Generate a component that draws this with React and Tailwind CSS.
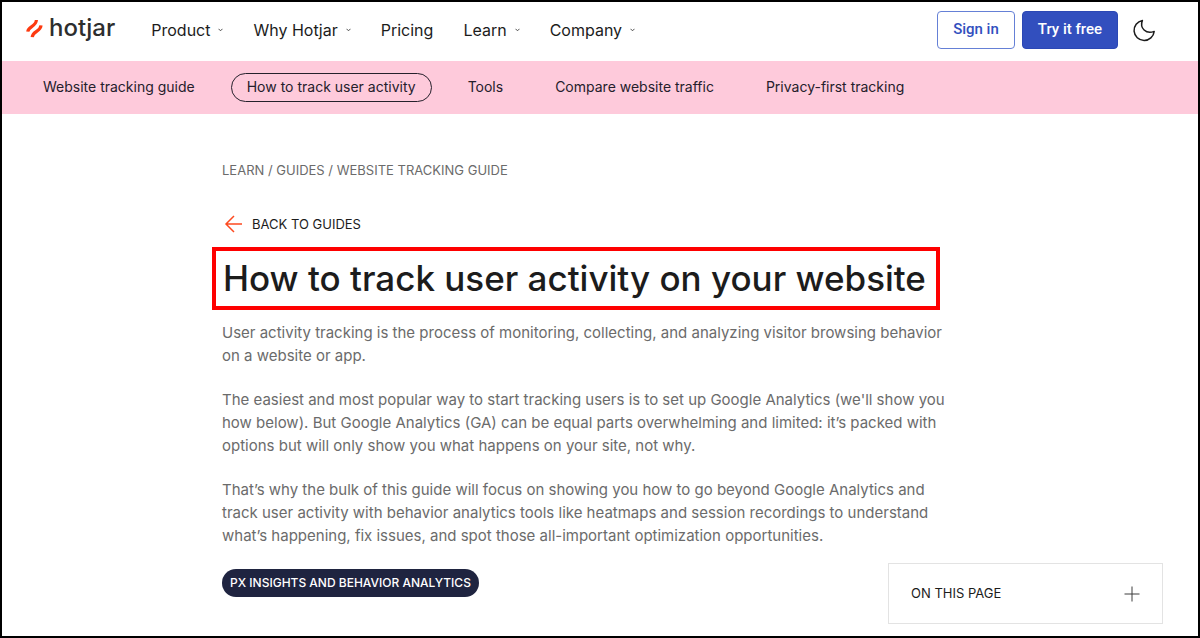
import React from "react";

const navItems = [
  { label: "Product", menu: true },
  { label: "Why Hotjar", menu: true },
  { label: "Pricing", menu: false },
  { label: "Learn", menu: true },
  { label: "Company", menu: true },
];

const guideLinks = [
  { label: "Website tracking guide" },
  { label: "How to track user activity", active: true },
  { label: "Tools" },
  { label: "Compare website traffic" },
  { label: "Privacy-first tracking" },
];

const paragraphs = [
  "User activity tracking is the process of monitoring, collecting, and analyzing visitor browsing behavior on a website or app.",
  "The easiest and most popular way to start tracking users is to set up Google Analytics (we'll show you how below). But Google Analytics (GA) can be equal parts overwhelming and limited: it’s packed with options but will only show you what happens on your site, not why.",
  "That’s why the bulk of this guide will focus on showing you how to go beyond Google Analytics and track user activity with behavior analytics tools like heatmaps and session recordings to understand what’s happening, fix issues, and spot those all-important optimization opportunities.",
];

function Logo() {
  return (
    <a href="#" className="flex items-center gap-[6px] pb-[3px] text-[24px] leading-7 font-medium text-[#2d2e2e]">
      <svg width="17" height="19" viewBox="0 0 17 19" fill="none" stroke="#fd3a10" strokeWidth="3.2" aria-hidden="true">
        <path d="M1.8 12.6C2.2 7 10 8 10.4 1" />
        <path d="M6.2 18.2C6.6 11.8 14.6 12.8 15 6.4" />
      </svg>
      hotjar
    </a>
  );
}

function Chevron() {
  return (
    <svg width="5" height="4" viewBox="0 0 5 4" fill="none" stroke="#3c3c3c" strokeWidth="0.9" aria-hidden="true">
      <path d="M0.5 0.8L2.5 2.8L4.5 0.8" />
    </svg>
  );
}

function Header() {
  return (
    <header className="flex h-[59px] items-center justify-between pb-1 pl-6 pr-[42px]">
      <div className="flex items-center gap-9">
        <Logo />
        <nav className="flex items-center gap-[30px] text-base text-[#1c1c1c]">
          {navItems.map((item) =>
            item.menu ? (
              <button key={item.label} type="button" className="flex items-center gap-2">
                {item.label}
                <Chevron />
              </button>
            ) : (
              <a key={item.label} href="#">{item.label}</a>
            )
          )}
        </nav>
      </div>

      <div className="flex items-center font-['Roboto',sans-serif] text-[15px] font-medium">
        <button type="button" className="h-[38px] rounded border border-[#6580d6] px-[15px] text-[#324fbe]">
          Sign in
        </button>
        <button type="button" className="ml-[7px] h-[38px] rounded border border-[#2b48b5] bg-[#324fbe] px-[15px] text-white">
          Try it free
        </button>
        <button type="button" aria-label="Dark mode" className="ml-[14px]">
          <svg width="24" height="24" viewBox="0 0 24 24" fill="none" stroke="#1c1c1c" strokeWidth="1.5" strokeLinejoin="round">
            <path d="M10.4 2.4A10.1 10.1 0 1 0 22.2 13.4C14 16.6 7.4 10 10.4 2.4Z" />
          </svg>
        </button>
      </div>
    </header>
  );
}

function GuideNav() {
  return (
    <nav className="flex h-[53px] items-center gap-5 bg-[#fecadb] pl-[25px] text-sm text-[#25202b]">
      {guideLinks.map((link) => (
        <a
          key={link.label}
          href="#"
          className={`rounded-full border px-[15px] pt-[3px] pb-1 ${link.active ? "border-[#25202b]" : "border-transparent"}`}
        >
          {link.label}
        </a>
      ))}
    </nav>
  );
}

function Article() {
  return (
    <main className="ml-[220px] mr-6 max-w-[738px] pt-[46px]">
      <p className="text-[13px] leading-5 text-[#6b6b6b]">
        <a href="#">LEARN</a> / <a href="#">GUIDES</a> / <a href="#">WEBSITE TRACKING GUIDE</a>
      </p>

      <a href="#" className="mt-[34px] flex items-center gap-2 text-[13px] leading-5 text-[#1c1c1c]">
        <svg width="22" height="20" viewBox="0 0 22 20" fill="none" stroke="#fd4a20" strokeWidth="1.5" aria-hidden="true">
          <path d="M20 10H4M12 2L4 10L12 18" />
        </svg>
        BACK TO GUIDES
      </a>

      <h1 className="-ml-[10px] mt-[13px] flex h-[63px] w-fit items-center whitespace-nowrap border-4 border-[#fe0000] pl-[7px] pr-[10px] text-[35px] font-medium text-[#1c1c1c]">
        How to track user activity on your website
      </h1>

      <div className="mt-[11px] flex flex-col gap-[21px] text-[15px] leading-[23px] text-[#6b6b6b]">
        {paragraphs.map((text, i) => (
          <p key={i}>{text}</p>
        ))}
      </div>

      <a href="#" className="mt-[22px] inline-flex h-7 items-center rounded-full bg-[#1f2440] px-2 text-xs font-medium text-white">
        PX INSIGHTS AND BEHAVIOR ANALYTICS
      </a>
    </main>
  );
}

export default function App() {
  return (
    <div className="min-h-screen border-2 border-black bg-white font-['Inter',sans-serif]">
      <Header />
      <GuideNav />
      <Article />

      {/* Floating table of contents */}
      <button
        type="button"
        className="fixed bottom-[14px] right-[37px] flex h-[61px] w-[275px] items-center justify-between border border-[#e3e3e3] bg-white px-[22px] text-[13px] text-[#1c1c1c]"
      >
        ON THIS PAGE
        <svg width="16" height="16" viewBox="0 0 16 16" stroke="#3c3c3c" strokeWidth="1" aria-hidden="true">
          <path d="M8 0.5V15.5M0.5 8H15.5" />
        </svg>
      </button>
    </div>
  );
}
